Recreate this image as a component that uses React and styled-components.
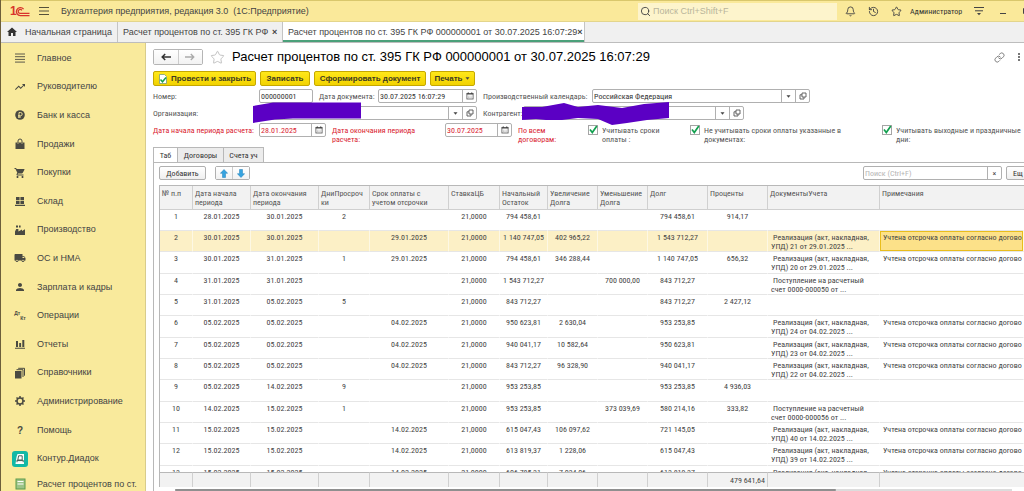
import { useState } from "react";
import { createGlobalStyle, styled } from "styled-components";
import { Bell, History, Link, Search, Star } from "lucide-react";
import { MdHome, MdLocalShipping, MdPerson, MdShoppingCart, MdTrendingUp } from "react-icons/md";

const DARK = '#4a4a42';

const BagIcon = () => (
    <svg width="12" height="12" viewBox="0 0 12 12">
        <path d="M1.5 4.500h9V11h-9z" fill={DARK} />
        <path d="M4 6V3a2 2 0 0 1 4 0v3" fill="none" stroke={DARK} strokeWidth="1" />
        <path d="M4 4.5V6M8 4.5V6" stroke="#f9ea9d" strokeWidth=".6" />
    </svg>
);

const CoinIcon = () => (
    <svg width="12" height="12" viewBox="0 0 12 12">
        <circle cx="6" cy="6" r="4.8" fill={DARK} />
        <path d="M5 9V3.5h1.6a1.6 1.6 0 0 1 0 3.2H4M4 8h3" fill="none" stroke="#f9ea9d" strokeWidth=".9" />
    </svg>
);

const StockIcon = () => (
    <svg width="12" height="12" viewBox="0 0 12 12">
        <path d="M2 2h3.6v3.2H2zM6.4 2H10v3.2H6.4zM2 6h3.6v3H2zM6.4 6H10v3H6.4zM1 9.8h10V11H1z" fill={DARK} />
    </svg>
);

const FactoryIcon = () => (
    <svg width="12" height="12" viewBox="0 0 12 12">
        <path d="M1 11V7.5L2.2 5h2.2v2.4L8 5.5V7l3-1.8V11zM2 1.5h2v2H2zM5 1.5h1.6v2H5z" fill={DARK} />
    </svg>
);

const ChartIcon = () => (
    <svg width="12" height="12" viewBox="0 0 12 12">
        <path d="M2 3h2v6H2zM5.2 5h1.9v4H5.2zM8.3 2h2v7h-2zM1 9.8h10v1H1z" fill={DARK} />
    </svg>
);

const BooksIcon = () => (
    <svg width="12" height="12" viewBox="0 0 12 12">
        <path d="M1 4h6.5v7.5H1z" fill={DARK} />
        <path d="M2.5 2.7H9V10M4.2 1.3h6.3v7.4" fill="none" stroke={DARK} strokeWidth="1" />
    </svg>
);

const GearIcon = () => (
    <svg width="12" height="12" viewBox="0 0 12 12" stroke={DARK} fill="none">
        <circle cx="6" cy="6" r="3" strokeWidth="1.5" />
        <path d="M6 1v2M6 9v2M1 6h2M9 6h2M2.5 2.5l1.3 1.3M8.2 8.2l1.3 1.3M9.5 2.5L8.2 3.8M3.8 8.2L2.5 9.5" strokeWidth="1.5" />
    </svg>
);

const MenuIcon = ({ size = 12 }) => (
    <svg width={size} height={size} viewBox="0 0 12 12">
        <path d="M1 2h10M1 4.7h10M1 7.4h10M1 10.1h10" stroke={DARK} strokeWidth=".9" />
    </svg>
);

const DiadocIcon = () => (
    <svg width="16" height="16" viewBox="0 0 16 16">
        <rect width="16" height="16" rx="3" fill="#12b8a6" />
        <path d="M5.5 3H12v10H3.5l1-7z" fill="#fff" />
        <path d="M6.6 4.8h3.6V9H5.8zM4.8 9.6h6.6M5 9.4v1.8M11.2 9.4v1.8" fill="none" stroke="#31524e" strokeWidth=".9" />
    </svg>
);

const CalcIcon = () => (
    <svg width="12" height="12" viewBox="0 0 12 12">
        <rect x="2" y="1" width="9" height="10" fill="#9cc487" stroke="#5d9a4c" />
        <path d="M3.5 3.5h6M3.5 6h6" stroke="#fff" strokeWidth="1" />
    </svg>
);

const CalendarIcon = () => (
    <svg width="8" height="8" viewBox="0 0 8 8">
        <rect x=".9" y="1.4" width="6.2" height="5.6" fill="#fff" stroke="#555" strokeWidth=".8" />
        <path d="M.8 2h6.4M2.3.5v1.2M5.7.5v1.2" stroke="#444" strokeWidth="1.2" />
        <path d="M2.2 4.2h3.6M2.2 5.6h3.6" stroke="#999" strokeWidth=".7" strokeDasharray=".8 .5" />
    </svg>
);

const ArrowDown = () => (
    <svg width="5" height="3" viewBox="0 0 5 3"><path d="M.5.3h4L2.5 2.7z" fill="#444" /></svg>
);

const OpenIcon = () => (
    <svg width="8" height="8" viewBox="0 0 8 8" fill="none" stroke="#555" strokeWidth=".9">
        <path d="M3 1h4v4H3z" />
        <path d="M3 2.8H1V7h4V5" />
    </svg>
);

const NAV = [
    { text: 'Главное', icon: <MenuIcon /> },
    { text: 'Руководителю', icon: <MdTrendingUp size={12} /> },
    { text: 'Банк и касса', icon: <CoinIcon /> },
    { text: 'Продажи', icon: <BagIcon /> },
    { text: 'Покупки', icon: <MdShoppingCart size={12} /> },
    { text: 'Склад', icon: <StockIcon /> },
    { text: 'Производство', icon: <FactoryIcon /> },
    { text: 'ОС и НМА', icon: <MdLocalShipping size={12} /> },
    { text: 'Зарплата и кадры', icon: <MdPerson size={12} /> },
    { text: 'Операции', icon: 'dtkt' },
    { text: 'Отчеты', icon: <ChartIcon /> },
    { text: 'Справочники', icon: <BooksIcon /> },
    { text: 'Администрирование', icon: <GearIcon /> },
    { text: 'Помощь', icon: '?' },
    { text: 'Контур.Диадок', icon: <DiadocIcon /> },
];

const COLUMNS = [
    ['№ п.п', 33], ['Дата начала периода', 58], ['Дата окончания периода', 68], ['ДниПросроч ки', 51],
    ['Срок оплаты с учетом отсрочки', 79], ['СтавкаЦБ', 51], ['Начальный Остаток', 48], ['Увеличение Долга', 50],
    ['Уменьшение Долга', 50], ['Долг', 60], ['Проценты', 60], ['ДокументыУчета', 112], ['Примечания', null],
];

const NOTE = 'Учтена отсрочка оплаты согласно догово';
const sale = (n, date) => [`Реализация (акт, накладная,`, `УПД) ${n} от ${date} ...`];
const income = (n) => [`Поступление на расчетный`, `счет 0000-0000${n} от ...`];

// начало, окончание, дни, срок оплаты, остаток, увеличение, уменьшение, долг, проценты, документ, примечание
const ROWS = [
    ['28.01.2025', '30.01.2025', '2', '', '794 458,61', '', '', '794 458,61', '914,17', null, ''],
    ['30.01.2025', '30.01.2025', '', '29.01.2025', '1 140 747,05', '402 965,22', '', '1 543 712,27', '', sale(21, '29.01.2025'), NOTE],
    ['30.01.2025', '31.01.2025', '1', '29.01.2025', '794 458,61', '346 288,44', '', '1 140 747,05', '656,32', sale(20, '29.01.2025'), NOTE],
    ['31.01.2025', '31.01.2025', '', '', '1 543 712,27', '', '700 000,00', '843 712,27', '', income(50), ''],
    ['31.01.2025', '05.02.2025', '5', '', '843 712,27', '', '', '843 712,27', '2 427,12', null, ''],
    ['05.02.2025', '05.02.2025', '', '04.02.2025', '950 623,81', '2 630,04', '', '953 253,85', '', sale(24, '04.02.2025'), NOTE],
    ['05.02.2025', '05.02.2025', '', '04.02.2025', '940 041,17', '10 582,64', '', '950 623,81', '', sale(23, '04.02.2025'), NOTE],
    ['05.02.2025', '05.02.2025', '', '04.02.2025', '843 712,27', '96 328,90', '', '940 041,17', '', sale(22, '04.02.2025'), NOTE],
    ['05.02.2025', '14.02.2025', '9', '', '953 253,85', '', '', '953 253,85', '4 936,03', null, ''],
    ['14.02.2025', '15.02.2025', '1', '', '953 253,85', '', '373 039,69', '580 214,16', '333,82', income(56), ''],
    ['15.02.2025', '15.02.2025', '', '14.02.2025', '615 047,43', '106 097,62', '', '721 145,05', '', sale(40, '14.02.2025'), NOTE],
    ['15.02.2025', '15.02.2025', '', '14.02.2025', '613 819,37', '1 228,06', '', '615 047,43', '', sale(39, '14.02.2025'), NOTE],
    ['15.02.2025', '15.02.2025', '', '14.02.2025', '606 785,31', '7 034,06', '', '613 819,37', '', sale(38, '14.02.2025'), NOTE],
];

const Check = ({ width, children }) => {
    const [checked, setChecked] = useState(true);

    return (
        <CheckLabel $w={width}>
            <CheckBox>
                <input type="checkbox" checked={checked} onChange={(e) => setChecked(e.target.checked)} />
                {checked && (
                    <svg width="10" height="10" viewBox="0 0 10 10">
                        <path d="M2 4.5l2.3 3L8.8 1" fill="none" stroke="#12a04f" strokeWidth="1.7" />
                    </svg>
                )}
            </CheckBox>
            <span>{children}</span>
        </CheckLabel>
    );
}

const Field = ({ id, width, value, red, kind, children }) => (
    <FieldGroup $w={width}>
        <FieldInput id={id} defaultValue={value} $red={red} />
        {kind === 'date' && <FieldButton type="button" aria-label="Календарь"><CalendarIcon /></FieldButton>}
        {kind === 'ref' && (
            <>
                <FieldButton type="button" aria-label="Выбрать"><ArrowDown /></FieldButton>
                <FieldButton type="button" aria-label="Открыть"><OpenIcon /></FieldButton>
            </>
        )}
        {children}
    </FieldGroup>
);

const App = () => {
    const [activeRow, setActiveRow] = useState(1);

    return (
        <Window>
            <GlobalStyle />
            <TopBar>
                <Logo width="20" height="13" viewBox="0 0 20 13">
                    <text x="0" y="10" fontFamily="Liberation Sans" fontWeight="bold" fontSize="12" fill="#d8342c">1</text>
                    <g fill="none" stroke="#d8342c" strokeWidth="1.3">
                        <path d="M13.6 4.2A4 4 0 1 0 10.4 10.6H19.5" />
                        <path d="M11.9 5.4A2 2 0 1 0 10.4 8.4H19.5" />
                    </g>
                </Logo>
                <MenuButton type="button" aria-label="Меню">
                    <svg width="10" height="10" viewBox="0 0 10 10"><path d="M0 1.5h10M0 5h10M0 8.5h10" stroke="#55503a" /></svg>
                </MenuButton>
                <AppTitle>Бухгалтерия предприятия, редакция 3.0&nbsp; (1С:Предприятие)</AppTitle>
                <TopSearch>
                    <Search size={11} color="#444" />
                    <input type="search" placeholder="Поиск Ctrl+Shift+F" aria-label="Поиск" />
                </TopSearch>
                <TopIcons>
                    <IconButton type="button" aria-label="Уведомления"><Bell size={11} /></IconButton>
                    <IconButton type="button" aria-label="История"><History size={11} /></IconButton>
                    <IconButton type="button" aria-label="Избранное"><Star size={11} /></IconButton>
                </TopIcons>
                <UserName href="#user">Администратор</UserName>
                <WindowButtons>
                    <IconButton type="button" aria-label="Настройки">
                        <svg width="10" height="10" viewBox="0 0 10 10">
                            <path d="M0 1.5h10M1 4.8h8" stroke="#444" />
                            <path d="M3 7h4L5 9.3z" fill="#444" />
                        </svg>
                    </IconButton>
                    <IconButton type="button" aria-label="Свернуть">
                        <svg width="8" height="10" viewBox="0 0 8 10"><path d="M1 7.5h6" stroke="#444" /></svg>
                    </IconButton>
                    <IconButton type="button" aria-label="Развернуть">
                        <svg width="8" height="10" viewBox="0 0 8 10"><path d="M1.5 2.5h5v5h-5z" fill="none" stroke="#444" /></svg>
                    </IconButton>
                </WindowButtons>
            </TopBar>

            <OpenTabs>
                <OpenTab $w="117px">
                    <MdHome size={12} color="#333" />
                    <a href="#home">Начальная страница</a>
                </OpenTab>
                <OpenTab $w="165px">
                    <a href="#report">Расчет процентов по ст. 395 ГК РФ</a>
                    <CloseButton type="button" aria-label="Закрыть">×</CloseButton>
                </OpenTab>
                <OpenTab $w="302px" $active>
                    <a href="#doc">Расчет процентов по ст. 395 ГК РФ 000000001 от 30.07.2025 16:07:29</a>
                    <CloseButton type="button" aria-label="Закрыть">×</CloseButton>
                </OpenTab>
            </OpenTabs>

            <Body>
                <Sidebar>
                    <NavList>
                        {NAV.map(({ text, icon }) => (
                            <NavItem key={text} href="#section">
                                <NavIcon>
                                    {icon === 'dtkt' ? <DtKt><span>Дт</span><span>Кт</span></DtKt> : icon}
                                </NavIcon>
                                {text}
                            </NavItem>
                        ))}
                    </NavList>
                    <NavLast href="#section">
                        <NavIcon><CalcIcon /></NavIcon>
                        Расчет процентов по ст.
                    </NavLast>
                </Sidebar>

                <Content>
                    <TitleRow>
                        <BackForward>
                            <button type="button" aria-label="Назад">
                                <svg width="10" height="8" viewBox="0 0 10 8"><path d="M10 4H1.5M4.2 1L1.2 4l3 3" fill="none" stroke="#333" strokeWidth="1.5" /></svg>
                            </button>
                            <button type="button" aria-label="Вперед">
                                <svg width="10" height="8" viewBox="0 0 10 8"><path d="M0 4h8.500M5.800 1l3 3-3 3" fill="none" stroke="#aaa" strokeWidth="1.3" /></svg>
                            </button>
                        </BackForward>
                        <Star size={15} color="#b5b5b5" strokeWidth={1.3} />
                        <h1>Расчет процентов по ст. 395 ГК РФ 000000001 от 30.07.2025 16:07:29</h1>
                        <TitleTools>
                            <IconButton type="button" aria-label="Ссылка"><Link size={11} color="#777" /></IconButton>
                            <IconButton type="button" aria-label="Еще">
                                <svg width="4" height="10" viewBox="0 0 4 10"><path d="M1 1h2v2H1zM1 4h2v2H1zM1 7h2v2H1z" fill="#777" /></svg>
                            </IconButton>
                        </TitleTools>
                    </TitleRow>

                    <Commands>
                        <YellowButton type="button" $w="103px">
                            <svg width="10" height="10" viewBox="0 0 10 10">
                                <path d="M1.5.5h5l2 2v7h-7z" fill="#fff" stroke="#7a9a7a" strokeWidth=".8" />
                                <path d="M2.5 5.5l2 2.3L8 3.5" fill="none" stroke="#19a04b" strokeWidth="1.5" />
                            </svg>
                            Провести и закрыть
                        </YellowButton>
                        <YellowButton type="button" $w="50px">Записать</YellowButton>
                        <YellowButton type="button" $w="112px">Сформировать документ</YellowButton>
                        <YellowButton type="button" $w="45px">Печать <ArrowDown /></YellowButton>
                    </Commands>

                    <Form>
                        <FormRow>
                            <Label htmlFor="number" $w="106px">Номер:</Label>
                            <Field id="number" width="54px" value="000000001" />
                            <Label htmlFor="date" $w="65px" $next>Дата документа:</Label>
                            <Field id="date" width="99px" value="30.07.2025 16:07:29" kind="date" />
                            <Label htmlFor="calendar" $w="115px" $next>Производственный календарь:</Label>
                            <Field id="calendar" width="218px" value="Российская Федерация" kind="ref" />
                        </FormRow>
                        <FormRow>
                            <Label htmlFor="org" $w="106px">Организация:</Label>
                            <Field id="org" width="218px" value="" kind="ref">
                                <Marker $left="-7px" width="110" height="22" viewBox="0 0 110 22">
                                    <path d="M0 4l20-3.500h88v16H40L22 17.500 0 21z" fill="#5b00c4" />
                                </Marker>
                            </Field>
                            <Label htmlFor="partner" $w="46px" $next>Контрагент:</Label>
                            <Field id="partner" width="221px" value="" kind="ref">
                                <Marker $left="-2px" width="148" height="26" viewBox="0 0 148 26">
                                    <path d="M0 5l20 0 22-4 14 4 20-2 24 3 22-4 25-2v16l-22 2-20 3-15 2-14-6-20-1-16 2-16 0-10-1-14 1z" fill="#5b00c4" />
                                </Marker>
                            </Field>
                        </FormRow>
                        <FormRow $tall>
                            <Label htmlFor="from" $w="106px" $red>Дата начала периода расчета:</Label>
                            <Field id="from" width="67px" value="28.01.2025" kind="date" red />
                            <Label htmlFor="to" $w="119px" $red $next>Дата окончания периода<br />расчета:</Label>
                            <Field id="to" width="67px" value="30.07.2025" kind="date" red />
                            <Label as="span" $w="76px" $red $next>По всем<br />договорам:</Label>
                            <Check width="102px">Учитывать сроки<br />оплаты :</Check>
                            <Check width="192px">Не учитывать сроки оплаты указанные в<br />документах:</Check>
                            <Check>Учитывать выходные и праздничные<br />дни:</Check>
                        </FormRow>
                    </Form>

                    <PageTabs>
                        <PageTab type="button" $w="25px" $active>Таб</PageTab>
                        <PageTab type="button" $w="46px">Договоры</PageTab>
                        <PageTab type="button" $w="40px">Счета уч</PageTab>
                    </PageTabs>

                    <Panel>
                        <Toolbar>
                            <GrayButton type="button" $w="47px">Добавить</GrayButton>
                            <MoveButtons>
                                <button type="button" aria-label="Вверх">
                                    <svg width="8" height="9" viewBox="0 0 8 9"><path d="M4 .5L7.6 4.3H5.5v4.200h-3V4.300H.4z" fill="#35a3e0" stroke="#1f7fb8" strokeWidth=".5" /></svg>
                                </button>
                                <button type="button" aria-label="Вниз">
                                    <svg width="8" height="9" viewBox="0 0 8 9"><path d="M4 8.500L.4 4.700h2.100V.5h3v4.200h2.100z" fill="#35a3e0" stroke="#1f7fb8" strokeWidth=".5" /></svg>
                                </button>
                            </MoveButtons>
                            <TableSearch>
                                <FieldInput type="text" placeholder="Поиск (Ctrl+F)" aria-label="Поиск в таблице" />
                                <FieldButton type="button" aria-label="Очистить">×</FieldButton>
                            </TableSearch>
                            <MoreButton type="button">Ещ</MoreButton>
                        </Toolbar>

                        <TableBox>
                            <Table>
                                <colgroup>
                                    {COLUMNS.map(([name, w]) => <Col key={name} $w={w} />)}
                                </colgroup>
                                <thead>
                                    <tr>{COLUMNS.map(([name]) => <th key={name}>{name}</th>)}</tr>
                                </thead>
                                <tbody>
                                    {ROWS.map(([from, to, days, due, rest, plus, minus, debt, percent, doc, note], index) => (
                                        <Row key={index} $active={index === activeRow} onClick={() => setActiveRow(index)}>
                                            <td>{index + 1}</td>
                                            <td>{from}</td>
                                            <td>{to}</td>
                                            <td>{days}</td>
                                            <td>{due}</td>
                                            <td>21,0000</td>
                                            <td>{rest}</td>
                                            <td>{plus}</td>
                                            <td>{minus}</td>
                                            <td>{debt}</td>
                                            <td>{percent}</td>
                                            <DocCell>{doc && <>{doc[0]}<br />{doc[1]}</>}</DocCell>
                                            <NoteCell $active={index === activeRow}>{note}</NoteCell>
                                        </Row>
                                    ))}
                                </tbody>
                                <tfoot>
                                    <tr>
                                        {COLUMNS.map(([name]) => <td key={name}>{name === 'Проценты' ? '479 641,64' : ''}</td>)}
                                    </tr>
                                </tfoot>
                            </Table>
                        </TableBox>
                        <ScrollTrack><ScrollThumb /></ScrollTrack>
                    </Panel>
                </Content>
            </Body>
        </Window>
    );
}

export default App;

const GlobalStyle = createGlobalStyle`
    * {
        box-sizing: border-box;
    }
    body {
        margin: 0;
        overflow: hidden;
        background: #fff;
    }
    button, input {
        font: inherit;
        color: inherit;
        margin: 0;
        padding: 0;
    }
    a {
        color: inherit;
        text-decoration: none;
    }
    svg {
        flex-shrink: 0;
    }
`
const Window = styled.div`
    display: flex;
    flex-direction: column;
    height: 100vh;
    border-left: 1px solid #6d5f3a;
    font-family: 'Roboto Condensed', 'Liberation Sans', sans-serif;
    font-size: 8px;
    line-height: 9px;
    color: #444;
`
const TopBar = styled.header`
    display: flex;
    align-items: center;
    height: 22px;
    flex-shrink: 0;
    padding-left: 9px;
    background: #fae99a;
    border-top: 1px solid #d9c76c;
    border-bottom: 1px solid #e3d58c;
    overflow: hidden;
`
const Logo = styled.svg`
    margin-right: 9px;
`
const MenuButton = styled.button`
    display: flex;
    border: none;
    background: none;
    margin-right: 12px;
`
const AppTitle = styled.div`
    flex: 1;
    font-family: 'Liberation Sans', sans-serif;
    font-size: 9px;
    white-space: nowrap;
`
const TopSearch = styled.label`
    display: flex;
    align-items: center;
    gap: 2px;
    width: 199px;
    height: 17px;
    padding-left: 2px;
    background: #fdf4cc;
    font-family: 'Liberation Sans', sans-serif;
    font-size: 9px;
    input {
        flex: 1;
        border: none;
        background: none;
        outline: none;
    }
    input::placeholder {
        color: #b9b49b;
    }
`
const IconButton = styled.button`
    display: flex;
    border: none;
    background: none;
    color: #444;
`
const TopIcons = styled.div`
    display: flex;
    gap: 12px;
    margin: 0 8px;
`
const UserName = styled.a`
    color: #333;
    width: 56px;
`
const WindowButtons = styled.div`
    display: flex;
    align-items: center;
    gap: 15px;
    margin-left: 8px;
    margin-right: -6px;
`
const OpenTabs = styled.nav`
    display: flex;
    height: 21px;
    flex-shrink: 0;
    background: #f0f0f0;
    border-bottom: 1px solid #bdbdbd;
`
const OpenTab = styled.div`
    display: flex;
    align-items: center;
    justify-content: space-between;
    width: ${p => p.$w};
    padding: 0 5px;
    border-right: 1px solid #c4c4c4;
    background: ${p => p.$active ? '#fff' : 'none'};
    box-shadow: ${p => p.$active ? 'inset 0 -2px #4ba07a' : 'none'};
    font-family: 'Liberation Sans', sans-serif;
    font-size: 9px;
    white-space: nowrap;
`
const CloseButton = styled.button`
    width: 5px;
    border: none;
    background: none;
    font-weight: bold;
`
const Body = styled.div`
    display: flex;
    flex: 1;
    min-height: 0;
`
const Sidebar = styled.aside`
    display: flex;
    flex-direction: column;
    width: 145px;
    flex-shrink: 0;
    padding-top: 1px;
    background: #f9ea9c;
    border-right: 1px solid #d8cc8c;
    font-family: 'Liberation Sans', sans-serif;
    font-size: 9px;
    overflow: hidden;
`
const NavList = styled.nav`
    display: grid;
    grid-auto-rows: 1fr;
    flex: 1;
    min-height: 0;
`
const NavItem = styled.a`
    display: flex;
    align-items: center;
    gap: 8px;
    padding-left: 10px;
    white-space: nowrap;
`
const NavLast = styled(NavItem)`
    height: 18px;
    padding-top: 4px;
`
const NavIcon = styled.span`
    display: flex;
    justify-content: center;
    width: 18px;
    color: #4a4a42;
    font-size: 10px;
    font-weight: bold;
`
const DtKt = styled.span`
    display: flex;
    font-size: 5px;
    line-height: 5px;
    span + span {
        padding-top: 5px;
    }
`
const Content = styled.main`
    display: flex;
    flex-direction: column;
    flex: 1;
    min-width: 0;
    padding-left: 7px;
    overflow: hidden;
`
const TitleRow = styled.div`
    display: flex;
    align-items: center;
    height: 28px;
    flex-shrink: 0;
    gap: 7px;
    h1 {
        flex: 1;
        margin: 0;
        font-family: 'Liberation Sans', sans-serif;
        font-size: 13px;
        font-weight: normal;
        line-height: 16px;
        color: #000;
        white-space: nowrap;
    }
`
const BackForward = styled.div`
    display: flex;
    width: 50px;
    height: 16px;
    border: 1px solid #b5b5b5;
    border-radius: 2px;
    button {
        display: flex;
        flex: 1;
        align-items: center;
        justify-content: center;
        border: none;
        background: linear-gradient(#fff, #f2f2f2);
    }
    button + button {
        border-left: 1px solid #ccc;
    }
`
const TitleTools = styled.div`
    display: flex;
    align-items: center;
    gap: 12px;
    padding-right: 3px;
`
const Commands = styled.div`
    display: flex;
    gap: 4px;
    flex-shrink: 0;
`
const YellowButton = styled.button`
    display: flex;
    align-items: center;
    justify-content: center;
    gap: 3px;
    width: ${p => p.$w};
    height: 15px;
    border: 1px solid #c5a800;
    border-radius: 2px;
    background: linear-gradient(#ffe81a, #f2d200);
    font-family: 'Liberation Sans', sans-serif;
    font-weight: bold;
    color: #3d3a20;
    white-space: nowrap;
`
const Form = styled.form`
    display: flex;
    flex-direction: column;
    gap: 3px;
    padding-top: 3px;
`
const FormRow = styled.div`
    display: flex;
    align-items: flex-start;
    height: ${p => p.$tall ? '22px' : '14px'};
`
const Label = styled.label`
    width: ${p => p.$w};
    flex-shrink: 0;
    padding-top: 3px;
    padding-left: ${p => p.$next ? '6px' : '0'};
    color: ${p => p.$red ? '#d9222f' : '#555'};
    white-space: nowrap;
`
const FieldGroup = styled.div`
    position: relative;
    display: flex;
    width: ${p => p.$w};
    height: 14px;
    flex-shrink: 0;
    border: 1px solid #b0b0b0;
    border-radius: 2px;
`
const FieldInput = styled.input`
    flex: 1;
    min-width: 0;
    border: none;
    outline: none;
    background: none;
    padding-left: 1px;
    color: ${p => p.$red ? '#d9222f' : '#333'};
    &::placeholder {
        color: #b5b5b5;
    }
`
const FieldButton = styled.button`
    display: flex;
    align-items: center;
    justify-content: center;
    width: 14px;
    border: none;
    border-left: 1px solid #b0b0b0;
    background: none;
`
const Marker = styled.svg`
    position: absolute;
    left: ${p => p.$left};
    top: -5px;
`
const CheckLabel = styled.label`
    display: flex;
    gap: 4px;
    width: ${p => p.$w || 'auto'};
    flex-shrink: 0;
    color: #555;
    white-space: nowrap;
    > span:last-child {
        padding-top: 3px;
    }
`
const CheckBox = styled.span`
    position: relative;
    width: 10px;
    height: 10px;
    margin-top: 2px;
    input {
        display: block;
        appearance: none;
        width: 10px;
        height: 10px;
        border: 1px solid #a5a5a5;
        background: #fff;
    }
    svg {
        position: absolute;
        left: 0;
        top: 0;
        pointer-events: none;
    }
`
const PageTabs = styled.div`
    display: flex;
    flex-shrink: 0;
    padding-top: 2px;
`
const PageTab = styled.button`
    width: ${p => p.$w};
    height: 15px;
    border: 1px solid #b8b8b8;
    border-bottom: none;
    border-left-width: ${p => p.$active ? '1px' : '0'};
    background: ${p => p.$active ? '#fff' : '#ececec'};
    color: #333;
    white-space: nowrap;
`
const Panel = styled.section`
    display: flex;
    flex-direction: column;
    flex: 1;
    min-height: 0;
    padding-left: 5px;
    border: solid #b8b8b8;
    border-width: 1px 0 0 1px;
`
const Toolbar = styled.div`
    display: flex;
    flex-shrink: 0;
    padding: 3px 0 5px;
`
const GrayButton = styled.button`
    width: ${p => p.$w};
    height: 14px;
    border: 1px solid #b0b0b0;
    border-radius: 2px;
    background: linear-gradient(#fff, #efefef);
    color: #333;
`
const MoveButtons = styled.div`
    display: flex;
    width: 35px;
    height: 14px;
    margin-left: 9px;
    border: 1px solid #b0b0b0;
    border-radius: 2px;
    button {
        display: flex;
        flex: 1;
        align-items: center;
        justify-content: center;
        border: none;
        background: linear-gradient(#fff, #f2f2f2);
    }
    button + button {
        border-left: 1px solid #ccc;
    }
`
const TableSearch = styled(FieldGroup)`
    width: 139px;
    margin-left: auto;
`
const MoreButton = styled(GrayButton)`
    width: 32px;
    flex-shrink: 0;
    margin-left: 4px;
    margin-right: -14px;
    padding-left: 6px;
    text-align: left;
`
const TableBox = styled.div`
    flex: 1;
    min-height: 0;
    overflow: hidden;
    border: solid #b8b8b8;
    border-width: 1px 0 0 1px;
`
const Col = styled.col`
    width: ${p => p.$w ? `${p.$w}px` : 'auto'};
`
const Table = styled.table`
    table-layout: fixed;
    width: 100%;
    border-spacing: 0;
    th {
        height: 24px;
        padding: 3px 0 0 2px;
        border-right: 1px solid #d0d0d0;
        border-bottom: 1px solid #cfcfcf;
        background: #f2f2f2;
        font-weight: normal;
        text-align: left;
        vertical-align: top;
        color: #555;
    }
    th:nth-child(5) {
        padding-right: 8px;
    }
    td {
        padding: 2px 0 0;
        text-align: center;
        vertical-align: top;
        white-space: nowrap;
    }
    tfoot td {
        position: sticky;
        bottom: 0;
        height: 15px;
        padding: 3px 2px 0 0;
        border-top: 1px solid #b8b8b8;
        border-right: 1px solid #d0d0d0;
        background: #f2f2f2;
        text-align: right;
    }
    th:last-child, tfoot td:last-child {
        border-right: none;
    }
`
const Row = styled.tr`
    height: 21px;
    background: ${p => p.$active ? '#fcf0c6' : '#fff'};
    &:nth-child(3n) {
        height: 22px;
    }
    td {
        border-bottom: 1px solid #e6e6e6;
        border-right: 1px solid ${p => p.$active ? '#fdf8e4' : 'transparent'};
    }
`
const DocCell = styled.td`
    &&& {
        padding-left: 3px;
        text-align: left;
        text-indent: 2px;
    }
`
const NoteCell = styled.td`
    &&& {
        padding-left: 3px;
        text-align: left;
        overflow: hidden;
        background: ${p => p.$active ? '#fce189' : 'none'};
        box-shadow: ${p => p.$active ? 'inset 0 0 0 1px #e9bd1c' : 'none'};
    }
`
const ScrollTrack = styled.div`
    flex-shrink: 0;
    height: 2px;
    margin: 2px 12px 0 16px;
    background: #dcdcdc;
`
const ScrollThumb = styled.div`
    width: 79%;
    height: 2px;
    border-radius: 1px;
    background: #8f8f8f;
`
